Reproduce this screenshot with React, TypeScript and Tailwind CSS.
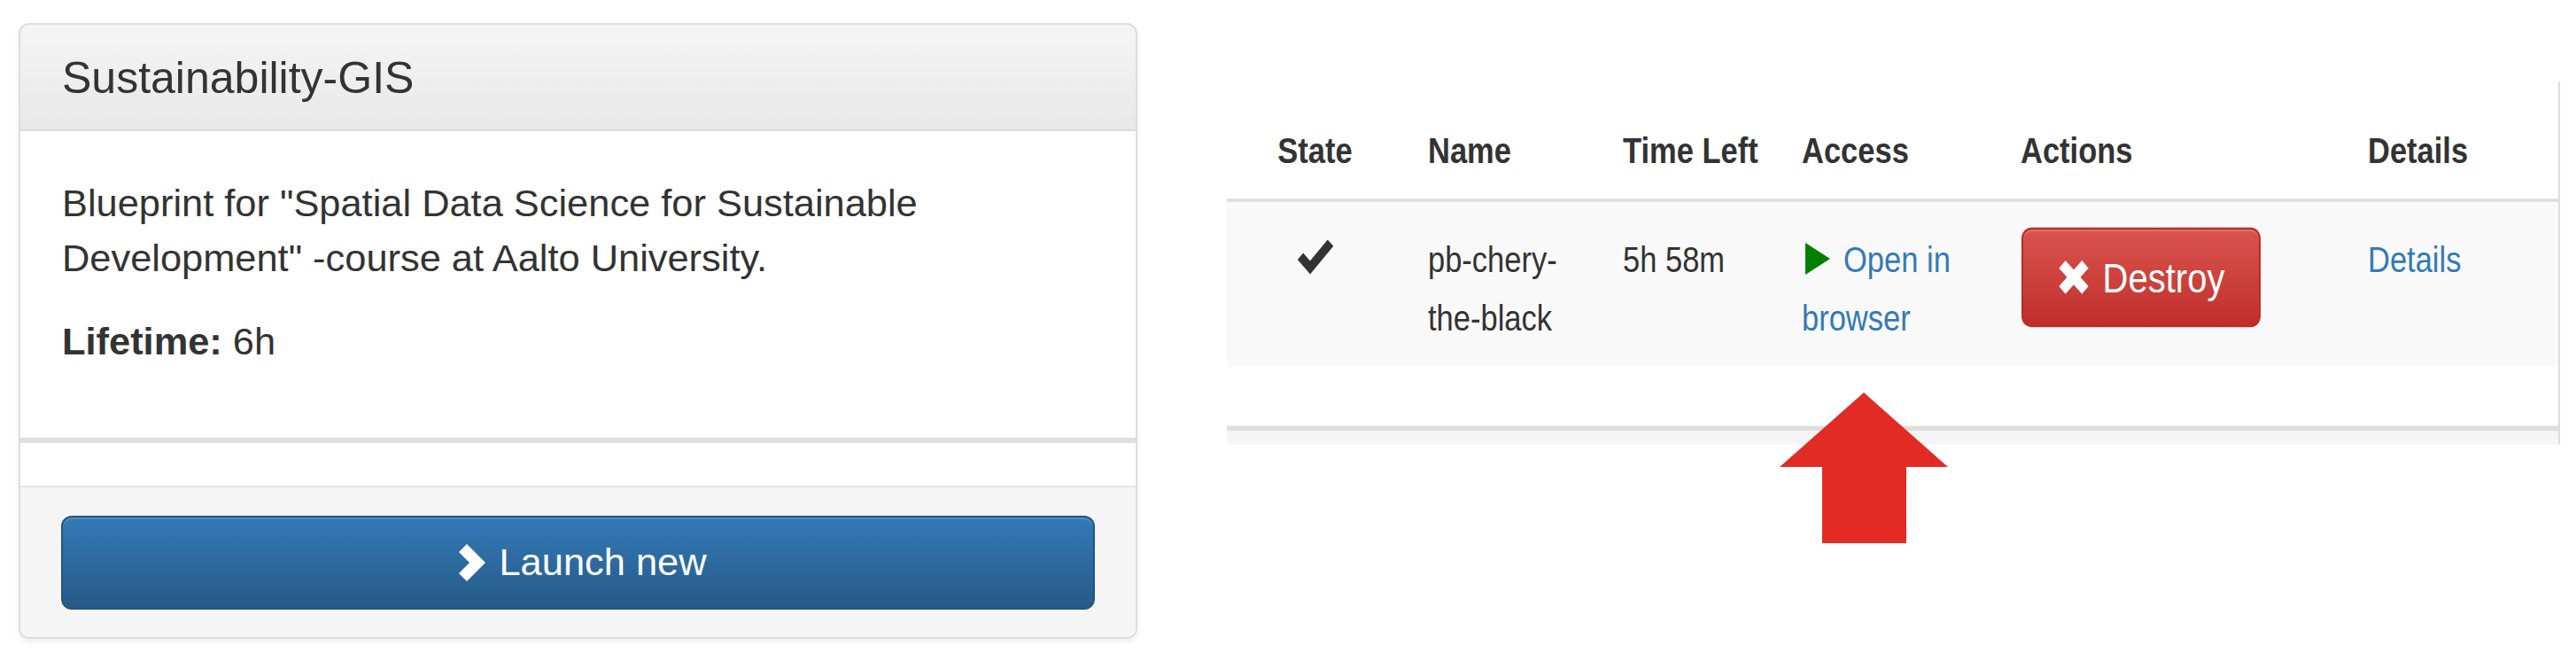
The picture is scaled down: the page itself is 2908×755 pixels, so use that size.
import React from "react";

function Chevron() {
  return (
    <svg width="32" height="44" viewBox="0 0 32 44" className="shrink-0">
      <polygon points="1,10 10,1 31,22 10,43 1,34 13,22" fill="#ffffff" />
    </svg>
  );
}

function XIcon() {
  return (
    <svg width="36" height="33" viewBox="0 0 36 33" className="shrink-0">
      <line x1="5" y1="4" x2="31" y2="29" stroke="#ffffff" strokeWidth="10.5" />
      <line x1="31" y1="4" x2="5" y2="29" stroke="#ffffff" strokeWidth="10.5" />
    </svg>
  );
}

function Check() {
  return (
    <svg width="42" height="34" viewBox="0 0 42 34" className="block mx-auto mt-[8px]">
      <polyline points="4,17 15,28 38,4" fill="none" stroke="#333333" strokeWidth="9" strokeLinejoin="miter" />
    </svg>
  );
}

function Play() {
  return (
    <svg width="28" height="31" viewBox="0 0 28 31" className="inline-block align-[-3px] ml-[4px] mr-[15px]">
      <polygon points="0,0 28,15.5 0,31" fill="#008000" />
    </svg>
  );
}

export default function App() {
  return (
    <div className="relative w-[2908px] h-[755px] bg-white flex items-start font-['Liberation_Sans',Arial,sans-serif] text-[#333333] overflow-hidden">
      {/* Left panel */}
      <div className="ml-[21px] mt-[26px] w-[1263px] shrink-0 border-2 border-[#dddddd] rounded-[12px] overflow-hidden shadow-[0_3px_6px_rgba(0,0,0,0.08)] flex flex-col bg-white">
        <div className="bg-linear-to-b from-[#f5f5f5] to-[#e8e8e8] border-b-2 border-[#dddddd] pt-[33px] pb-[30px] px-[47px]">
          <h3 className="text-[50px] leading-[55px] font-normal">Sustainability-GIS</h3>
        </div>
        <div className="pt-[50px] pb-[46px] px-[47px] text-[43.4px] leading-[62px]">
          <p className="mb-[32px]">
            Blueprint for "Spatial Data Science for Sustainable Development" -course at Aalto University.
          </p>
          <p className="mb-[32px]">
            <b className="font-bold">Lifetime:</b> 6h
          </p>
        </div>
        <div className="h-[6px] bg-[#e0e0e0]" />
        <div className="h-[48px] bg-white" />
        <div className="border-t-2 border-[#e4e4e4] bg-[#f5f5f5] pt-[32px] pb-[31px] px-[46px]">
          <button className="w-full h-[106px] rounded-[12px] border-2 border-[#245580] bg-linear-to-b from-[#337ab7] to-[#265a88] text-white text-[43.4px] flex items-center justify-center gap-[14px] pl-[10px] shadow-[inset_0_2px_0_rgba(255,255,255,0.15)]">
            <Chevron />
            <span>Launch new</span>
          </button>
        </div>
      </div>

      {/* Right table area */}
      <div className="ml-[101px] mt-[92px] w-[1505px] shrink-0 origin-top scale-y-[1.16] border-r-2 border-[#dddddd] text-[34.5px] bg-white">
        <table className="table-fixed w-[1503px] border-collapse">
          <colgroup>
            <col className="w-[207px]" />
            <col className="w-[220px]" />
            <col className="w-[202px]" />
            <col className="w-[247px]" />
            <col className="w-[392px]" />
            <col className="w-[235px]" />
          </colgroup>
          <thead>
            <tr>
              <th className="pt-[47px] pb-[27px] leading-[40px] font-bold text-center align-top border-b-[3px] border-[#dddddd] pl-[12px] pr-[20px]">State</th>
              <th className="pt-[47px] pb-[27px] leading-[40px] font-bold text-left align-top border-b-[3px] border-[#dddddd] px-[20px]">Name</th>
              <th className="pt-[47px] pb-[27px] leading-[40px] font-bold text-left align-top border-b-[3px] border-[#dddddd] px-[20px] whitespace-nowrap">Time Left</th>
              <th className="pt-[47px] pb-[27px] leading-[40px] font-bold text-left align-top border-b-[3px] border-[#dddddd] px-[20px]">Access</th>
              <th className="pt-[47px] pb-[27px] leading-[40px] font-bold text-left align-top border-b-[3px] border-[#dddddd] px-[20px]">Actions</th>
              <th className="pt-[47px] pb-[27px] leading-[40px] font-bold text-left align-top border-b-[3px] border-[#dddddd] px-[20px]">Details</th>
            </tr>
          </thead>
          <tbody>
            <tr className="h-[162px] bg-[#f9f9f9]">
              <td className="align-top pt-[28px] leading-[57px] pl-[12px] pr-[20px] text-center">
                <Check />
              </td>
              <td className="align-top pt-[28px] leading-[57px] px-[20px]">pb-chery-the-black</td>
              <td className="align-top pt-[28px] leading-[57px] px-[20px] whitespace-nowrap">5h 58m</td>
              <td className="align-top pt-[28px] leading-[57px] px-[20px]">
                <a className="text-[#337ab7]">
                  <Play />
                  Open in browser
                </a>
              </td>
              <td className="align-top pt-[25px] px-[20px]">
                <button className="ml-[1px] w-[270px] h-[97px] rounded-[11px] border-2 border-[#b92c28] bg-linear-to-b from-[#d9534f] to-[#c12e2a] text-white text-[40px] flex items-center justify-center gap-[15px] shadow-[inset_0_2px_0_rgba(255,255,255,0.15)]">
                  <XIcon />
                  <span>Destroy</span>
                </button>
              </td>
              <td className="align-top pt-[28px] leading-[57px] px-[20px]">
                <a className="text-[#337ab7]">Details</a>
              </td>
            </tr>
          </tbody>
        </table>
        <div className="h-[57px] bg-white" />
        <div className="h-[5px] bg-[#dddddd]" />
        <div className="h-[13px] bg-[#f5f5f5]" />
      </div>

      {/* Red annotation arrow */}
      <svg className="absolute left-[2009px] top-[443px]" width="190" height="170" viewBox="0 0 190 170">
        <polygon points="95,0 190,84 143,84 143,170 48,170 48,84 0,84" fill="#e32b25" />
      </svg>
    </div>
  );
}
